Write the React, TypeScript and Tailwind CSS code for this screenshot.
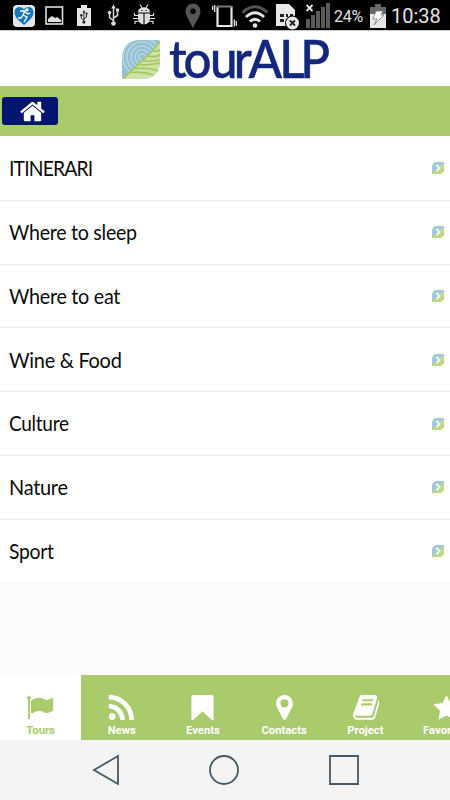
import type { ReactNode } from "react"
import clsx from "clsx"

interface MenuItem {
  label: string
  className: string
}

interface Tab {
  label: string
  icon: string
  viewBox?: string
}

const menuItems: MenuItem[] = [
  { label: "ITINERARI", className: "tracking-[-0.9px] scale-x-[0.92]" },
  { label: "Where to sleep", className: "tracking-[-0.3px] scale-x-[0.935]" },
  { label: "Where to eat", className: "tracking-[-0.3px] scale-x-[0.94]" },
  { label: "Wine & Food", className: "tracking-[-0.3px] scale-x-[0.95]" },
  { label: "Culture", className: "tracking-[-0.3px] scale-x-[0.905]" },
  { label: "Nature", className: "tracking-[-0.3px] scale-x-[0.95]" },
  { label: "Sport", className: "tracking-[-0.3px] scale-x-[0.92]" },
]

const homePath =
  "M1472 992v480q0 26-19 45t-45 19h-384v-384h-256v384h-384q-26 0-45-19t-19-45v-480q0-1 .5-3t.5-3l575-474 575 474q1 2 1 6zm223-69l-62 74q-8 9-21 11h-3q-13 0-21-7l-692-577-692 577q-12 8-24 7-13-2-21-11l-62-74q-8-10-7-23.5t11-21.5l719-599q32-26 76-26t76 26l244 204v-195q0-14 9-23t23-9h192q14 0 23 9t9 23v408l219 182q10 8 11 21.5t-7 23.5z"

const tabs: Tab[] = [
  {
    label: "Tours",
    icon: "M320 256q0 72-64 110v1266q0 13-9.5 22.5t-22.5 9.5h-64q-13 0-22.5-9.5t-9.5-22.5v-1266q-64-38-64-110 0-53 37.5-90.5t90.5-37.5 90.5 37.5 37.5 90.5zm1472 64v763q0 25-12.5 38.5t-39.5 27.5q-215 116-369 116-61 0-123.5-22t-108.5-48-115.5-48-142.5-22q-192 0-464 146-17 9-33 9-26 0-45-19t-19-45v-742q0-32 31-55 21-14 79-43 236-120 421-120 107 0 200 29t219 88q38 19 88 19 54 0 117.5-21t110-47 88-47 54.5-21q26 0 45 19t19 45z",
    viewBox: "60 0 1792 1792",
  },
  {
    label: "News",
    icon: "M576 1344q0 80-56 136t-136 56-136-56-56-136 56-136 136-56 136 56 56 136zm512 123q2 28-17 48-18 21-47 21h-135q-25 0-43-16.5t-20-41.5q-22-229-184.5-391.5t-391.5-184.5q-25-2-41.5-20t-16.5-43v-135q0-29 21-47 17-17 43-17h5q160 13 306 80.5t259 181.5q114 113 181.5 259t80.5 306zm512 2q2 27-18 47-18 20-46 20h-143q-26 0-44.5-17.5t-19.5-42.5q-12-215-101-408.5t-231.5-336-336-231.5-408.5-102q-25-1-42.5-19.5t-17.5-43.5v-143q0-28 20-46 18-18 44-18h3q262 13 501.5 120t425.5 294q187 186 294 425.5t120 501.5z",
    viewBox: "150 90 1500 1500",
  },
  {
    label: "Events",
    icon: "M4.500 1h19q2 0 2 2v22.500q0 3-2.500 1l-9-8.500-9 8.500q-2.500 2-2.500-1V3q0-2 2-2z",
    viewBox: "0 0 28 28",
  },
  {
    label: "Contacts",
    icon: "M14 1a8.800 8.800 0 0 1 8.800 8.800q0 2-.8 3.600l-6.500 12.500q-.5.9-1.500.9t-1.500-.9L6 13.400q-.8-1.600-.8-3.600A8.800 8.800 0 0 1 14 1zm0 4.500a4.200 4.200 0 1 0 0 8.400 4.200 4.200 0 0 0 0-8.400z",
    viewBox: "0 0 28 28",
  },
  {
    label: "Project",
    icon: "M1703 478q40 57 18 129l-275 906q-19 64-76.500 107.500t-122.500 43.500h-923q-77 0-148.500-53.500t-99.500-131.500q-24-67-2-127 0-4 3-27t4-37q1-8-3-21.500t-3-19.500q2-11 8-21t16.500-23.500 16.500-23.500q23-38 45-91.500t30-91.500q3-10 .5-30t-.5-28q3-11 17-28t17-23q21-36 42-92t25-90q1-9-2.500-32t.5-28q4-13 22-30.500t22-22.500q19-26 42.500-84.500t27.500-96.500q1-8-3-25.500t-2-26.500q2-8 9-18t18-23 17-21q8-12 16.500-30.500t15-35 16-36 19.500-32 26.500-23.500 36-11.500 47.500 5.500l-1 3q38-9 51-9h761q74 0 114 56t18 130l-274 906q-36 119-71.500 153.500t-128.500 34.500h-869q-27 0-38 15-11 16-1 43 24 70 144 70h923q29 0 56-15.500t35-41.500l300-987q7-22 5-57 38 15 59 43zm-1064 2q-4 13 2 22.500t20 9.500h608q13 0 25.500-9.500t16.500-22.500l21-64q4-13-2-22.500t-20-9.500h-608q-13 0-25.500 9.500t-16.500 22.500zm-83 256q-4 13 2 22.500t20 9.500h608q13 0 25.500-9.500t16.500-22.500l21-64q4-13-2-22.500t-20-9.500h-608q-13 0-25.500 9.500t-16.500 22.500z",
    viewBox: "0 60 1680 1680",
  },
  {
    label: "Favorites",
    icon: "M14 1l4.100 8.400 9.400 1.300-6.800 6.600 1.600 9.300-8.300-4.400-8.300 4.400 1.600-9.300L.5 10.700l9.400-1.300z",
    viewBox: "0 0 28 28",
  },
]

function StatusIcon({ width, className, children }: { width: number; className?: string; children: ReactNode }) {
  return (
    <svg width={width} height="30" viewBox={`0 0 ${width} 30`} fill="none" className={clsx("shrink-0", className)}>
      {children}
    </svg>
  )
}

function UsbGlyph({ color }: { color: string }) {
  return (
    <g stroke={color} fill={color}>
      <path d="M6.500 8v14M6.500 20.500l-4-3v-4M6.500 18l4-2.500v-5" fill="none" strokeWidth="1.500" />
      <path d="M6.500 4.500l2.300 4H4.200z" stroke="none" />
      <circle cx="6.500" cy="23.500" r="2.300" stroke="none" />
      <circle cx="2.500" cy="12.500" r="1.800" stroke="none" />
      <path d="M9 8.500h3v3H9z" stroke="none" />
    </g>
  )
}

function StatusBar() {
  return (
    <div className="flex h-[31px] shrink-0 items-start border-b border-[#c8c8c8] bg-black font-[Roboto,sans-serif] text-[#e2e2e2]">
      {/* Notifications */}
      <StatusIcon width={22} className="ml-[13px]">
        <rect y="5" width="22" height="22" rx="4" fill="#e4e6e8" />
        <path d="M11 25C5 20 1.500 16.500 1.500 12.500c0-6 7-7 9.500-3 2.500-4 9.500-3 9.500 3 0 4-3.500 7.500-9.500 12.500z" fill="#1679bb" />
        <circle cx="14" cy="9.800" r="1.600" fill="#fff" />
        <path d="M7 11l5 0-2 4 4 2-3 5M12 12l3 2 2-1M10 15l-2 3-3 0" stroke="#fff" strokeWidth="1.300" />
      </StatusIcon>
      <StatusIcon width={19} className="ml-[10px]">
        <rect x="1" y="7" width="16.500" height="17" stroke="#dedede" strokeWidth="1.600" />
        <path d="M3 22v-3l4-3 3 2 2-1 4 3v2z" fill="#dedede" />
      </StatusIcon>
      <StatusIcon width={14} className="ml-[13px]">
        <path d="M4 5h6v3h4v18H0V8h4z" fill="#e6e6e6" />
        <g transform="translate(2.700 7) scale(.65)">
          <UsbGlyph color="#222" />
        </g>
      </StatusIcon>
      <StatusIcon width={14} className="ml-[16px]">
        <UsbGlyph color="#d8d8d8" />
      </StatusIcon>
      <StatusIcon width={22} className="ml-[12px]">
        <path d="M5 12.500q0-5 6-5.200 6 .2 6 5.200zM5 13.500h5.500v11Q5 23.500 5 18zM11.500 13.500H17V18q0 5.500-5.500 6.500z" fill="#dedede" />
        <path d="M7 4.500l2 3.500M15 4.500L13 8M5 15.500H1.500V13M17 15.500h3.500V13M5 18.500H0M17 18.500h5M6 21l-4 .5V24M16 21l4 .5V24" stroke="#dedede" strokeWidth="1.200" />
        <path d="M8.200 10.500h1.300M12.500 10.500h1.300" stroke="#111" strokeWidth="1.200" />
      </StatusIcon>

      {/* System indicators */}
      <StatusIcon width={16} className="ml-[30px]">
        <path
          fillRule="evenodd"
          d="M8 3.500a7.500 7.500 0 0 1 7.500 7.500c0 5-5 11-7.500 17.500C5.500 22 .5 16 .5 11A7.500 7.500 0 0 1 8 3.500zm0 5a2.800 2.800 0 1 0 0 5.600 2.800 2.800 0 0 0 0-5.600z"
          fill="#565656"
        />
      </StatusIcon>
      <StatusIcon width={26} className="ml-[11px]">
        <path d="M5.500 7v19h14V7" stroke="#e5e5e5" strokeWidth="2.200" />
        <path d="M4.500 6.500h16" stroke="#777" strokeWidth="2" />
        <path d="M2.700 5v7M.7 6v4M22.300 19.500v7M24.300 21v5" stroke="#e5e5e5" strokeWidth="1.300" />
      </StatusIcon>
      <StatusIcon width={28} className="ml-[3px]">
        <path d="M1.500 12.500q12.500-11.500 25 0" stroke="#555" strokeWidth="3" />
        <path d="M5 17q9-8.500 18 0" stroke="#e5e5e5" strokeWidth="3" />
        <path d="M9 21.500q5-4.500 10 0" stroke="#e5e5e5" strokeWidth="3" />
        <circle cx="14" cy="25.500" r="2.300" fill="#e5e5e5" />
      </StatusIcon>
      <StatusIcon width={24} className="ml-[7px]">
        <path d="M0 4h13l6 6v16H0z" fill="#e8e8e8" />
        <path d="M4 14h4v3H4zM4 19h4v3H4zM10 14h2v3h-2zM14 14h3v3h-3zM10 19h3v3h-3z" fill="#222" />
        <circle cx="16.500" cy="23" r="7.500" fill="#000" />
        <circle cx="16.500" cy="23" r="6.500" fill="#e8e8e8" />
        <path d="M14 20.500l5 5M19 20.500l-5 5" stroke="#222" strokeWidth="1.800" />
      </StatusIcon>
      <StatusIcon width={24} className="ml-[6px]">
        <path d="M0 28v-9h4v9zM5 28V15h4v13zM10 28V11h4v17zM15 28V7h4v21zM20 28V3h4v25z" fill="#5b5b5b" />
        <path d="M.5 5l6 6M6.500 5l-6 6" stroke="#e8e8e8" strokeWidth="1.800" />
      </StatusIcon>
      <span className="ml-[4px] w-[32px] whitespace-nowrap pt-[7px] text-[16px] leading-[19px] tracking-[-0.2px]">24%</span>
      <StatusIcon width={16} className="ml-[4px]">
        <path d="M5 4h6v3h5v21H0V7h5z" fill="#686868" />
        <path d="M0 14h16v14H0z" fill="#e8e8e8" />
        <path d="M6 11h7l-2 4h3L4 25l3-6H3z" fill="#fff" stroke="#777" strokeWidth=".8" />
      </StatusIcon>
      <span className="ml-[5px] whitespace-nowrap pt-[4px] text-[20px] leading-6">10:38</span>
    </div>
  )
}

function LeafLogo() {
  return (
    <svg width="39" height="40" viewBox="0 0 39 40" fill="none">
      <defs>
        <clipPath id="leaf">
          <path d="M17 0H36q2 0 2 2V22Q37 38.500 20 39H2q-2 0-2-2V17Q1 1 17 0z" />
        </clipPath>
      </defs>
      <g clipPath="url(#leaf)">
        <path d="M0 0h39v40H0z" fill="#94c0d2" />
        <g stroke="#b5d6e3" strokeWidth="1.600">
          <circle cx="20" cy="17" r="3" />
          <circle cx="20" cy="17" r="7" />
          <circle cx="20" cy="17" r="11" />
          <circle cx="20" cy="17" r="15" />
          <circle cx="20" cy="17" r="19" />
        </g>
        <path d="M39 1Q30 13 20 21T0 39.500V40h39z" fill="#cfe2a7" />
        <path
          d="M38 2Q30 12 20 21T1 39M31 11q4 1 9-2M26 16q7 2 14-2M21 20.500q9 2 18-1.500M17 24.500q10 1 21-1.500M13 28.500q13-1 23 2M9 32.500q12-1.500 22 2.500"
          stroke="#a3c85f"
          strokeWidth="1.700"
        />
      </g>
    </svg>
  )
}

// Small leaf with a chevron, shown at the end of every menu row
function LeafArrow() {
  return (
    <svg width="12" height="12" viewBox="0 0 12 12" fill="none">
      <path d="M4.500 0H12v7.500Q11.500 11.500 7.500 12H0V4.500Q.5.500 4.500 0z" fill="#a3c9d8" />
      <path d="M12 1v6.500Q11.500 11.500 7.500 12H0v-.5z" fill="#bedb82" />
      <path d="M4.500 2.800l3 3.200-3 3.200" stroke="#fff" strokeWidth="1.800" />
    </svg>
  )
}

export default function App() {
  return (
    <div className="flex h-[800px] w-[450px] flex-col overflow-hidden bg-[#fcfafb]">
      <StatusBar />

      <header className="flex h-[55px] shrink-0 items-start bg-white pl-[122px] pt-[9px]">
        <LeafLogo />
        <svg width="170" height="46" viewBox="0 0 170 46" className="ml-[9px] overflow-visible">
          <text
            x="-1.200 14.600 43 68.500 84.500 117.500 140"
            y="38"
            transform="scale(.93 1)"
            strokeWidth=".5"
            className="fill-[#13277c] stroke-[#13277c] font-[Lato,sans-serif] text-[53px] font-medium"
          >
            tourALP
          </text>
        </svg>
      </header>

      <div className="flex h-[50px] shrink-0 items-center bg-[#a9cb6c] pl-[2px]">
        <button className="flex h-[28px] w-[56px] items-center justify-center rounded-[3px] bg-[#04156f] pl-[5px]">
          <svg width="27" height="27" viewBox="0 0 1792 1792" fill="#fff">
            <path d={homePath} />
          </svg>
        </button>
      </div>

      <ul className="shrink-0 bg-white pt-px">
        {menuItems.map((item) => (
          <li
            key={item.label}
            className="flex h-[63.800px] items-center justify-between border-b border-[#ececec] pl-[8.500px] pr-[6px] last:h-[62.500px] last:border-0"
          >
            <span
              className={clsx(
                "mb-px inline-block origin-left font-[Lato,sans-serif] text-[21px] text-[#0b0b0b]",
                item.className,
              )}
            >
              {item.label}
            </span>
            <LeafArrow />
          </li>
        ))}
      </ul>

      <nav className="mt-auto flex h-[65px] shrink-0 overflow-hidden bg-[#a9cb6c]">
        {tabs.map((tab, i) => (
          <div
            key={tab.label}
            className={clsx(
              "flex w-[81.200px] shrink-0 flex-col items-center pt-[19px]",
              i === 0 ? "bg-white text-[#a9cb6c]" : "text-white",
            )}
          >
            <svg width="27" height="27" viewBox={tab.viewBox ?? "0 0 1792 1792"} fill="currentColor" fillRule="evenodd">
              <path d={tab.icon} />
            </svg>
            <span className="mt-[2px] font-[Roboto,sans-serif] text-[11.300px] font-bold leading-4">{tab.label}</span>
          </div>
        ))}
      </nav>

      <footer className="flex h-[60px] shrink-0 items-center justify-between bg-[#f4f4f4] pl-[92px] pr-[90px]">
        <svg width="28" height="32" viewBox="0 0 28 32" fill="none" stroke="#485963" strokeWidth="1.800">
          <path d="M2 16L26 2v28z" />
        </svg>
        <svg width="32" height="32" viewBox="0 0 32 32" fill="none" stroke="#485963" strokeWidth="1.800">
          <circle cx="16" cy="16" r="14" />
        </svg>
        <svg width="32" height="32" viewBox="0 0 32 32" fill="none" stroke="#485963" strokeWidth="1.800">
          <path d="M2 2h28v28H2z" />
        </svg>
      </footer>
    </div>
  )
}
